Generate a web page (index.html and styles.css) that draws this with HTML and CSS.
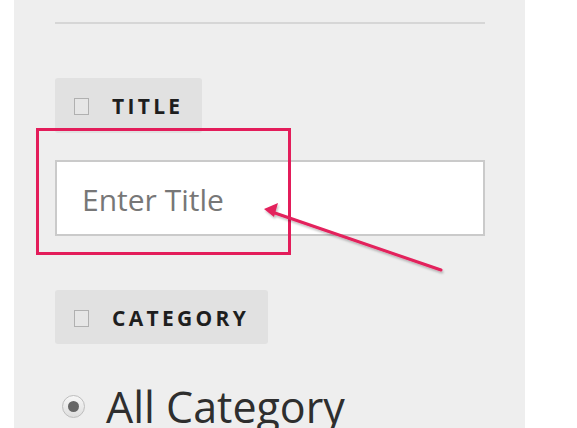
FILE: index.html
```html
<!DOCTYPE html>
<html>
<head>
<meta charset="utf-8">
<link rel="stylesheet" href="styles.css">
</head>
<body>
<div class="page">
  <div class="panel">
    <div class="rule"></div>
    <div class="tag tag-title"><span class="box"></span><span class="label">TITLE</span></div>
    <div class="field">
      <input class="input" type="text" placeholder="Enter Title">
    </div>
    <div class="tag tag-cat"><span class="box"></span><span class="label">CATEGORY</span></div>
    <label class="radio-row"><span class="radio"><span class="dot"></span></span><span class="radio-text">All Category</span></label>
  </div>
  <div class="highlight"></div>
  <svg class="arrow" width="577" height="428" viewBox="0 0 577 428">
    <defs>
      <filter id="sh" x="-10%" y="-10%" width="120%" height="140%">
        <feDropShadow dx="1" dy="2" stdDeviation="1.2" flood-color="#000" flood-opacity="0.25"/>
      </filter>
    </defs>
    <g filter="url(#sh)">
      <line x1="441" y1="270" x2="272" y2="212" stroke="#e3205c" stroke-width="3" stroke-linecap="round"/>
      <polygon points="264,209 278,203 274,217" fill="#e3205c"/>
    </g>
  </svg>
</div>
</body>
</html>
```
FILE: styles.css
```css
html, body {
  margin: 0;
  padding: 0;
  background: #ffffff;
}
.page {
  position: relative;
  width: 577px;
  height: 428px;
  overflow: hidden;
  display: flex;
  padding-left: 14px;
  box-sizing: border-box;
}
.panel {
  width: 511px;
  height: 428px;
  background: #eeeeee;
  box-sizing: border-box;
  padding: 22px 40px 0 41px;
  display: flex;
  flex-direction: column;
  align-items: flex-start;
  font-family: "Open Sans", "DejaVu Sans", sans-serif;
}
.rule {
  width: 430px;
  height: 2px;
  background: #d6d6d6;
}
.tag {
  display: inline-flex;
  align-items: center;
  height: 55px;
  padding: 3px 22px 0 19px;
  background: #e1e1e1;
  border-radius: 3px;
  box-sizing: border-box;
}
.tag-title {
  margin-top: 54px;
}
.tag-cat {
  margin-top: 54px;
}
.box {
  width: 13px;
  height: 15px;
  border: 1px solid #b0b0b0;
  background: #e6e6e6;
  margin-right: 23px;
}
.label {
  font-weight: 700;
  font-size: 21px;
  letter-spacing: 3.3px;
  color: #1e1e1e;
  line-height: 1;
  margin-right: -3px;
}
.field {
  margin-top: 27px;
}
.input {
  display: block;
  width: 430px;
  height: 76px;
  box-sizing: border-box;
  border: 2px solid #cacaca;
  background: #ffffff;
  padding: 3px 0 0 25px;
  font-family: "Open Sans", "DejaVu Sans", sans-serif;
  font-size: 30px;
  color: #333;
  outline: none;
}
.input::placeholder {
  color: #777777;
}
.radio-row {
  display: flex;
  align-items: center;
  margin-top: 41px;
  margin-left: 7px;
}
.radio {
  width: 23px;
  height: 23px;
  border-radius: 50%;
  border: 1px solid #bdbdbd;
  background: linear-gradient(#f7f7f7, #dedede);
  box-sizing: border-box;
  display: flex;
  align-items: center;
  justify-content: center;
  margin-right: 21px;
}
.dot {
  width: 11px;
  height: 11px;
  border-radius: 50%;
  background: #666666;
}
.radio-text {
  font-size: 43px;
  color: #2e2e2e;
  line-height: 1;
}
.highlight {
  position: absolute;
  left: 36px;
  top: 128px;
  width: 255px;
  height: 127px;
  border: 3px solid #e31c5a;
  box-sizing: border-box;
}
.arrow {
  position: absolute;
  left: 0;
  top: 0;
}
```
